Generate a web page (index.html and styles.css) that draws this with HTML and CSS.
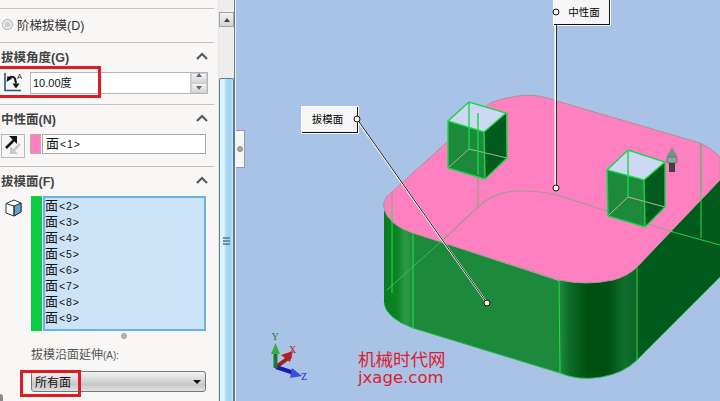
FILE: index.html
```html
<!DOCTYPE html>
<html lang="zh">
<head>
<meta charset="utf-8">
<title>拔模</title>
<link rel="stylesheet" href="styles.css">
</head>
<body>
<div class="app">
  <aside class="panel">
    <div class="clip-top"></div>
    <section class="sec sec-radio">
      <label class="radio-row"><span class="radio"></span><span>阶梯拔模(D)</span></label>
    </section>
    <section class="sec sec-angle">
      <header class="sec-head"><h2>拔模角度(G)</h2><svg class="chev" viewBox="0 0 12 8"><path d="M1 7 6 2l5 5"/></svg></header>
      <div class="row">
        <svg class="ico-angle" viewBox="0 0 18 20">
          <path d="M1 1v17.500H17" fill="none" stroke="#1c5a7a" stroke-width="1.600"/>
          <path d="M4.500 7C6 4 9 4 11 6.500l1 5" fill="none" stroke="#111" stroke-width="2"/>
          <path d="M2.500 10 3.500 4 8 6.500zM8.500 11.500h7l-3.500 5z" fill="#111"/>
          <text x="13" y="6.500" class="ico-a">A</text>
        </svg>
        <div class="spin-input">
          <span class="val">10.00度</span>
          <div class="spin"><span class="up"></span><span class="down"></span></div>
        </div>
      </div>
    </section>
    <section class="sec sec-neutral">
      <header class="sec-head"><h2>中性面(N)</h2><svg class="chev" viewBox="0 0 12 8"><path d="M1 7 6 2l5 5"/></svg></header>
      <div class="row row-neutral">
        <button class="ico-btn" type="button">
          <svg viewBox="0 0 22 22" width="22" height="22">
            <path d="M4 13 13 4" stroke="#111" stroke-width="2.500"/>
            <path d="M7 1h8v8z" fill="#111"/>
            <path d="M11 16 18 9" stroke="#c8c8c8" stroke-width="2.500"/>
            <path d="M8 11v8h8z" fill="#c8c8c8"/>
          </svg>
        </button>
        <span class="swatch"></span>
        <div class="field">面&lt;1&gt;</div>
      </div>
    </section>
    <section class="sec sec-faces">
      <header class="sec-head"><h2>拔模面(F)</h2><svg class="chev" viewBox="0 0 12 8"><path d="M1 7 6 2l5 5"/></svg></header>
      <div class="row row-faces">
        <svg class="ico-cube" viewBox="0 0 17 18">
          <path d="M1 4.500 9 1l7 3v9l-7 4-8-3z" fill="#fff" stroke="#333"/>
          <path d="M9 7l7-3v9l-7 4z" fill="#5aa5c8"/>
          <path d="M1 4.500 9 7v10" fill="none" stroke="#333"/>
          <path d="M9 7l7-3v9l-7 4z" fill="none" stroke="#333"/>
        </svg>
        <span class="bar"></span>
        <ul class="list">
          <li>面&lt;2&gt;</li><li>面&lt;3&gt;</li><li>面&lt;4&gt;</li><li>面&lt;5&gt;</li>
          <li>面&lt;6&gt;</li><li>面&lt;7&gt;</li><li>面&lt;8&gt;</li><li>面&lt;9&gt;</li>
        </ul>
      </div>
      <div class="grip"></div>
      <div class="ext-label">拔模沿面延伸<small>(A):</small></div>
      <div class="select"><span>所有面</span><i class="caret"></i></div>
    </section>
    <div class="mark mark-angle"></div>
    <div class="mark mark-select"></div>
    <div class="corner"></div>
  </aside>

  <div class="scrollbar">
    <div class="sb-up"><i></i></div>
    <div class="sb-track"></div>
    <div class="sb-thumb"><div class="sb-lines"><i></i><i></i><i></i></div></div>
  </div>
  <div class="splitter"></div>

  <main class="viewport">
    <div class="tab"><i></i></div>
    <div class="tag tag-draft">拔模面</div>
    <div class="tag tag-neutral">中性面</div>
    <svg class="model" viewBox="0 0 484 401" width="484" height="401" aria-hidden="true">
      <defs>
        <linearGradient id="gFront" x1="324" x2="401" y1="0" y2="0" gradientUnits="userSpaceOnUse">
          <stop offset="0" stop-color="#1c8a3a"/><stop offset=".12" stop-color="#0c6d28"/><stop offset=".35" stop-color="#00500f"/>
          <stop offset=".62" stop-color="#004f12"/><stop offset=".85" stop-color="#10702c"/><stop offset="1" stop-color="#0a6426"/>
        </linearGradient>
        <linearGradient id="gLeft" x1="148" x2="177" y1="0" y2="0" gradientUnits="userSpaceOnUse">
          <stop offset="0" stop-color="#0a7a20"/><stop offset=".45" stop-color="#0b8424"/><stop offset=".75" stop-color="#2e9a46"/><stop offset="1" stop-color="#1c8a3a"/>
        </linearGradient>
      </defs>
      <path d="M148 210V303Q150 318 177 328V233Q155 226 148 210Z" fill="url(#gLeft)"/>
      <path d="M177 233 326 282 324 373 177 328Z" fill="#1c8a3a"/>
      <path d="M323 280Q350 286 377 280 392 276 401 267V360Q388 373 366 377 342 381 324 373Z" fill="url(#gFront)"/>
      <path d="M401 267 484 180V277L401 360Z" fill="#005a1c"/>
      <path d="M148 303Q150 318 177 328L324 373Q342 381 366 377 388 373 401 360L484 277" fill="none" stroke="#22b84a" stroke-width="1"/>
      <path d="M484 157Q476 148 464 143L321 101Q300 93 282 96 266 98 254 103L156 192Q146 199 148 208 152 225 177 233L323 280Q350 286 377 280 392 276 401 267L484 180Z" fill="#ff80c0" stroke="#a8968c" stroke-width="1"/>
      <path d="M209 238 244 205Q262 190 287 191 305 191 321 195L437 232" fill="none" stroke="#9c9c90" stroke-width="1.200"/>
      <path d="M437 232 484 245" fill="none" stroke="#22d050" stroke-width="1"/>
      <path d="M209 238 151 290" fill="none" stroke="#3cb860" stroke-width="1"/>
      <path d="M242 113V207M156 193V210" fill="none" stroke="#9c9c90" stroke-width="1.200"/>
      <path d="M465 143V192" fill="none" stroke="#22c850" stroke-width="1"/>
      <path d="M156 210V293M177 233V328M323 280 324 373M401 267V360M465 192V238" fill="none" stroke="#22e050" stroke-width="1"/>
      <path d="M212 121 233 102 270 113 248 132Z" fill="#cfd8f2"/>
      <path d="M212 121 248 132 249 179 212 168Z" fill="#1c8a3a"/>
      <path d="M248 132 270 113 271 158 249 179Z" fill="#005a1c"/>
      <path d="M212 168 233 149 271 158" fill="none" stroke="#a8b090" stroke-width="1"/>
      <path d="M212 121 233 102 270 113 248 132ZM212 121V168L249 179 271 158V113M248 132 249 179M233 102V149M242 113V175" fill="none" stroke="#14d84a" stroke-width="1.400"/>
      <path d="M371 170 392 150 429 162 408 180Z" fill="#cfd8f2"/>
      <path d="M371 170 408 180 409 227 372 216Z" fill="#1c8a3a"/>
      <path d="M408 180 429 162V207L409 227Z" fill="#005a1c"/>
      <path d="M372 216 392 197 429 207" fill="none" stroke="#b8b890" stroke-width="1"/>
      <path d="M371 170 392 150 429 162 408 180ZM371 170 372 216 409 227 429 207V162M408 180 409 227M392 150V197" fill="none" stroke="#14d84a" stroke-width="1.400"/>
      <path d="M436 147 442 157H430Z" fill="#7d8f8a"/>
      <rect x="431" y="157" width="10" height="6" rx="2" fill="#8fa39d" stroke="#66706c"/>
      <rect x="433" y="163" width="6" height="9" fill="#3c4442"/>
      <path d="M121 120 251 303" stroke="#fff" stroke-width="2" fill="none"/>
      <path d="M121 119 251 303" stroke="#1a1a1a" stroke-width="1" fill="none"/>
      <path d="M319.500 25V188" stroke="#fff" stroke-width="2" fill="none"/>
      <path d="M320.500 25V188" stroke="#333" stroke-width="1" fill="none"/>
      <g class="dot"><circle cx="121" cy="119" r="3"/><circle cx="320" cy="12" r="3"/><circle cx="320" cy="188" r="3"/><circle cx="251" cy="303" r="3"/></g>
      <path d="M40 367 55 356" stroke="#a02020" stroke-width="4"/>
      <path d="M57 351 54 362 45 355Z" fill="#b02020"/>
      <path d="M40 367 58 373" stroke="#1c1cb0" stroke-width="4"/>
      <path d="M66 376 54 378 56 368Z" fill="#3a50e0"/>
      <path d="M39.500 368V350" stroke="#1a7a2a" stroke-width="4"/>
      <path d="M39.500 343 44 354H35Z" fill="#3fa83f"/>
      <text x="35.500" y="340" class="axis ax-y">Y</text>
      <text x="53" y="353" class="axis ax-x">X</text>
      <text x="65" y="380" class="axis ax-z">Z</text>
    </svg>
    <div class="brand"><div>机械时代网</div><div class="url">jxage.com</div></div>
  </main>
</div>
</body>
</html>
```
FILE: styles.css
```css
* { box-sizing: border-box; }
html, body { margin: 0; padding: 0; }
body { width: 720px; height: 401px; overflow: hidden; font-family: "Liberation Sans", "Noto Sans CJK SC", sans-serif; color: #222; }
.app { display: flex; width: 720px; height: 401px; }

.panel { position: relative; width: 218px; height: 401px; background: #f8f7f6; overflow: hidden; flex: none; }
.clip-top { height: 9px; border-bottom: 1px solid #c4c4c4; margin-right: 4px; }
.sec { margin-right: 4px; border-bottom: 1px solid #c4c4c4; }
.sec:last-of-type { border-bottom: 0; }
.sec-radio { height: 34px; padding: 7px 0 0 2px; }
.radio-row { display: flex; align-items: center; gap: 4px; font-size: 12.500px; height: 16px; color: #333; }
.radio { width: 11px; height: 11px; flex: none; border-radius: 50%; border: 1px solid #aaa; background: radial-gradient(circle, #cfcfcf 45%, #f2f2f2 50%); }
.sec-angle { height: 62px; }
.sec-neutral { height: 62px; }
.sec-head { display: flex; justify-content: space-between; align-items: center; height: 29px; padding: 0 6px 3px 1px; }
h2 { margin: 0; font-size: 12.500px; font-weight: 700; color: #444; }
.chev { width: 12px; height: 8px; fill: none; stroke: #555; stroke-width: 2; }
.row { display: flex; align-items: flex-start; }
.ico-angle { width: 18px; height: 20px; margin: 0 0 0 4px; flex: none; }
.ico-a { font-size: 7.500px; fill: #222; font-family: "Liberation Sans", sans-serif; }
.spin-input { display: flex; justify-content: space-between; width: 178px; height: 22px; margin-left: 8px; border: 1px solid #b4b4b4; background: #fff; }
.val { font-size: 11px; line-height: 20px; padding-left: 2px; color: #111; }
.spin { display: flex; flex-direction: column; width: 17px; border-left: 1px solid #c8c8c8; }
.spin span { flex: 1; background: linear-gradient(#f4f4f4, #d8d8dc); position: relative; border: 1px solid #d0d0d0; }
.up::after, .down::after { content: ""; position: absolute; left: 4px; border: 3.500px solid transparent; }
.up::after { top: -1px; border-bottom: 4px solid #5a6a80; border-top: 0; }
.down::after { top: 2px; border-top: 4px solid #5a6a80; border-bottom: 0; }
.row-neutral { padding-left: 1px; }
.ico-btn { width: 24px; height: 24px; padding: 0; border: 1px solid #b8b8b8; background: #f6f6f6; display: flex; align-items: center; justify-content: center; }
.swatch { width: 11px; height: 20px; margin-left: 5px; background: #ff80c0; border: 1px solid #c8a8b8; }
.field { width: 164px; height: 20px; margin-left: 1px; border: 1px solid #a8a8a8; background: #fff; font-size: 10.500px; line-height: 17px; padding-left: 3px; letter-spacing: .9px; color: #111; }
.field::first-letter { font-size: 13px; }
.sec-faces { height: 230px; }
.row-faces { height: 136px; }
.ico-cube { width: 17px; height: 18px; margin: 3px 0 0 5px; flex: none; }
.bar { width: 11px; height: 135px; margin-left: 9px; background: #0ccc44; }
.list { list-style: none; margin: 0 0 0 1px; padding: 0 0 0 0; width: 163px; height: 135px; background: #cce4f7; border: 2px solid #6ab2e2; font-size: 10.500px; letter-spacing: .9px; color: #111; }
.list li { height: 16px; line-height: 16px; }
.list li::first-letter { font-size: 13px; }
.grip { width: 6px; height: 6px; margin: 1px 0 0 121px; border-radius: 50%; background: #b8b8b8; border: 1px solid #999; }
.ext-label { margin: 9px 0 0 31px; font-size: 12px; line-height: 15px; color: #555; }
.ext-label small { font-size: 10px; }
.select { display: flex; justify-content: space-between; align-items: center; width: 175px; height: 21px; margin: 8px 0 0 31px; padding: 0 4px 0 3px; border: 1px solid #777; border-radius: 3px; background: linear-gradient(#f4f4f4, #c8c8c8 65%, #e0e0e0); font-size: 12px; color: #111; }
.caret { width: 0; height: 0; border: 4px solid transparent; border-top: 4px solid #111; border-bottom: 0; }
.mark { position: absolute; border: 3px solid #dc1c24; }
.mark-angle { left: -4px; top: 66px; width: 105px; height: 32px; }
.mark-select { left: 20px; top: 370px; width: 61px; height: 27px; }
.corner { position: absolute; left: 0; bottom: 0; width: 3px; height: 7px; background: #8a8a8a; border-radius: 0 3px 0 0; }

.scrollbar { position: relative; width: 16px; height: 401px; flex: none; background: #eeedec; border-left: 1px solid #e4e4e4; display: flex; flex-direction: column; }
.sb-up { width: 15px; height: 15px; margin-top: 12px; background: linear-gradient(#f2f2f2, #d4d4d4); border: 1px solid #a4a4a4; display: flex; align-items: center; justify-content: center; }
.sb-up i { border: 3px solid transparent; border-bottom: 4px solid #444; border-top: 0; }
.sb-track { height: 51px; }
.sb-thumb { flex: 1; display: flex; justify-content: center; padding-top: 158px; border: 1px solid #5c7e94; border-bottom: 0; border-radius: 2px 2px 0 0; background: linear-gradient(90deg, #dff1fb 0 30%, #a9d7f1 50%, #a3d2ee 80%, #c8e4f4); }
.sb-lines { display: flex; flex-direction: column; gap: 1px; }
.sb-lines i { display: block; width: 7px; height: 2px; background: #6a90a8; }
.splitter { width: 2px; flex: none; background: #f0f0f0; border-left: 1px solid #5c7e94; }

.viewport { position: relative; flex: 1; height: 401px; background: #a9c3e6; overflow: hidden; }
.model { display: block; position: relative; }
.tab { position: absolute; left: 0; top: 130px; width: 9px; height: 38px; background: #f6f6f6; border: 1px solid #9a9a9a; border-left: 0; display: flex; align-items: center; justify-content: center; }
.tab i { width: 6px; height: 6px; border-radius: 50%; background: #a8a8a8; border: 1px solid #888; }
.dot circle { fill: #f4f4e8; stroke: #111; stroke-width: 1; }
.axis { font: 10px "Liberation Serif", serif; }
.ax-y { fill: #157a4a; }
.ax-x { fill: #c02020; }
.ax-z { fill: #1c1cd8; }
.tag { position: absolute; width: 56px; height: 26px; background: #f6f6f6; border: solid #111; border-width: 0 1px 1px 0; outline: 1px solid #fff; font: 10.500px/24px "Noto Sans CJK SC", sans-serif; text-align: center; color: #000; }
.tag-draft { left: 66px; top: 107px; padding-right: 4px; }
.tag-neutral { left: 318px; top: 0; height: 25px; padding-left: 5px; }
.brand { position: absolute; left: 122px; top: 349px; color: #dc2030; font: 17.500px/19px "Noto Sans CJK SC", sans-serif; }
.brand .url { font: 16.500px/20px "DejaVu Sans", sans-serif; }
```
